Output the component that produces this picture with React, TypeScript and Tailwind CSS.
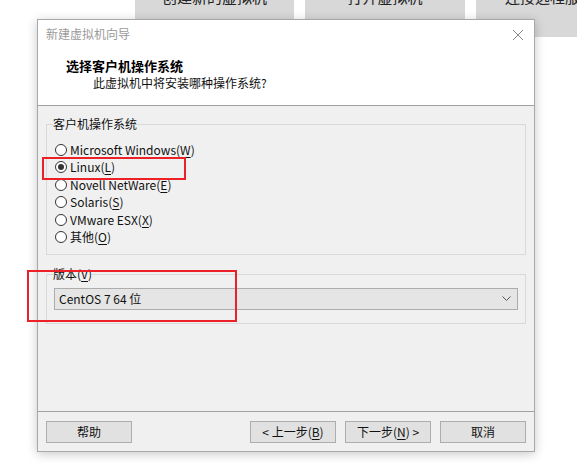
import React from "react";

const font = { fontFamily: '"Noto Sans CJK SC", "Noto Sans", sans-serif' };

function Radio({ label, mnemonic, checked }: { label: string; mnemonic: string; checked?: boolean }) {
  return (
    <div className="flex h-[17.5px] items-center">
      <span className="ml-[2px] flex h-[12px] w-[12px] items-center justify-center rounded-full border border-[#333] bg-white">
        {checked && <span className="h-[6px] w-[6px] rounded-full bg-[#333]" />}
      </span>
      <span className="ml-[3px] text-[12px] leading-[16px] text-[#111]">
        {label}(<span className="underline underline-offset-2">{mnemonic}</span>)
      </span>
    </div>
  );
}

function Btn({ children }: { children: React.ReactNode }) {
  return (
    <button className="flex h-[22px] w-[86px] items-center justify-center border border-[#adadad] bg-[#e1e1e1] text-[12px] leading-[16px] text-[#111]">
      {children}
    </button>
  );
}

export default function App() {
  return (
    <div className="relative h-[474px] w-[577px] overflow-hidden bg-white" style={font}>
      {/* tiles behind the wizard */}
      <div className="flex h-[37px] gap-[11px] pl-[135px]">
        <div className="w-[159px] overflow-hidden bg-[#d8d8d8]">
          <div className="-mt-[13px] text-center text-[15px] leading-[20px] text-[#222]">创建新的虚拟机</div>
        </div>
        <div className="w-[160px] overflow-hidden bg-[#d8d8d8]">
          <div className="-mt-[13px] text-center text-[15px] leading-[20px] text-[#222]">打开虚拟机</div>
        </div>
        <div className="flex-1 overflow-hidden bg-[#d8d8d8]">
          <div className="-mt-[13px] pl-[29px] text-[15px] leading-[20px] whitespace-nowrap text-[#222]">连接远程服务器</div>
        </div>
      </div>

      {/* wizard dialog */}
      <div className="relative z-10 -mt-[18px] ml-[37px] flex h-[433px] w-[498px] flex-col border border-[#a8a8a8] bg-[#f0f0f0] shadow-[0_2px_10px_rgba(0,0,0,0.22)]">
        <div className="h-[86px] border-b border-[#a0a0a0] bg-white">
          <div className="flex h-[16px] items-center justify-between pt-0 pl-[8px] pr-[10px] mt-[6px]">
            <span className="text-[12px] leading-[16px] text-[#9a9a9a]">新建虚拟机向导</span>
            <svg width="12" height="12" viewBox="0 0 12 12" className="mt-[1px]">
              <path d="M1 1 L11 11 M11 1 L1 11" stroke="#8a8a8a" strokeWidth="1" fill="none" />
            </svg>
          </div>
          <div className="mt-[15px] pl-[28px] text-[13px] font-bold leading-[18px] text-black">选择客户机操作系统</div>
          <div className="pl-[55px] text-[12px] leading-[16px] text-[#111]">此虚拟机中将安装哪种操作系统?</div>
        </div>

        <div className="flex-1 px-[8px]">
          <fieldset className="mt-[10px] border border-[#d9d9d9] px-[6px] pb-[8px]">
            <legend className="text-[12px] leading-[16px] text-[#111]">客户机操作系统</legend>
            <div className="mt-[9px] flex flex-col">
              <Radio label="Microsoft Windows" mnemonic="W" />
              <Radio label="Linux" mnemonic="L" checked />
              <Radio label="Novell NetWare" mnemonic="E" />
              <Radio label="Solaris" mnemonic="S" />
              <Radio label="VMware ESX" mnemonic="X" />
              <Radio label="其他" mnemonic="O" />
            </div>
          </fieldset>

          <fieldset className="mt-[11px] border border-[#d9d9d9] px-[6px] pb-[13px]">
            <legend className="text-[12px] leading-[16px] text-[#111]">
              版本(<span className="underline underline-offset-2">V</span>)
            </legend>
            <div className="mx-[1px] mt-[6px] flex h-[22px] items-center justify-between border border-[#adadad] bg-[#e5e5e5] pl-[4px] pr-[6px]">
              <span className="text-[12px] leading-[16px] text-[#111]">CentOS 7 64 位</span>
              <svg width="9" height="6" viewBox="0 0 9 6">
                <path d="M0.5 0.5 L4.5 4.5 L8.5 0.5" stroke="#555" strokeWidth="1" fill="none" />
              </svg>
            </div>
          </fieldset>
        </div>

        <div className="flex h-[40px] items-start border-t border-[#a0a0a0] px-[8px] pt-[9px]">
          <Btn>帮助</Btn>
          <div className="ml-auto flex gap-[9px]">
            <Btn>
              &lt; 上一步(<span className="underline underline-offset-2">B</span>)
            </Btn>
            <Btn>
              下一步(<span className="underline underline-offset-2">N</span>) &gt;
            </Btn>
            <Btn>取消</Btn>
          </div>
        </div>
      </div>

      {/* red annotation boxes */}
      <div className="absolute left-[42px] top-[157px] z-20 h-[23px] w-[144px] border-2 border-[#ec2127]" />
      <div className="absolute left-[27px] top-[270px] z-20 h-[52px] w-[210px] border-2 border-[#ec2127]" />
    </div>
  );
}
